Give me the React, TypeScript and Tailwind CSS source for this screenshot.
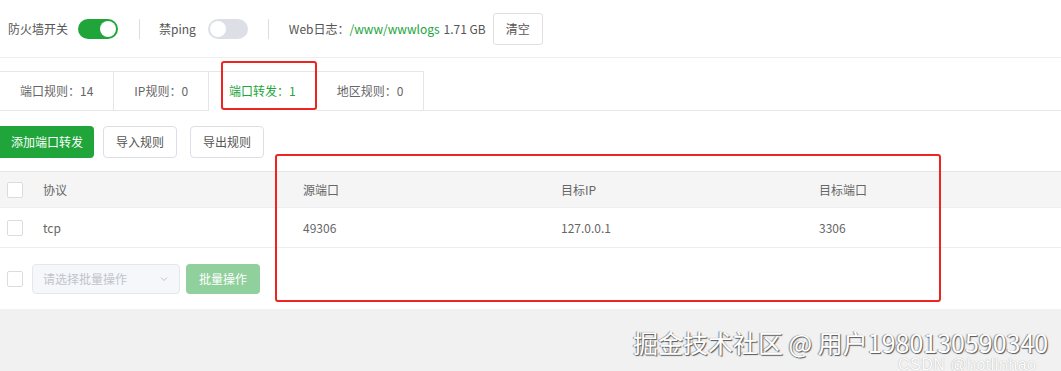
import React from 'react';

const font = { fontFamily: '"Microsoft YaHei", "Noto Sans CJK SC", "Liberation Sans", sans-serif' };

function Toggle({ on }: { on: boolean }) {
  return (
    <div
      className={`w-[40px] h-[20px] rounded-full flex items-center px-[2px] ${
        on ? 'bg-[#20a53a] justify-end' : 'bg-[#dcdfe6] justify-start'
      }`}
    >
      <div className="w-[16px] h-[16px] rounded-full bg-white" />
    </div>
  );
}

function Checkbox() {
  return <div className="w-[16px] h-[16px] border border-[#dcdcdc] rounded-[2px] bg-white" />;
}

function Tab({ label, active }: { label: string; active?: boolean }) {
  return (
    <div
      className={`h-[40px] px-[20px] flex items-center border-r border-t border-[#e6e6e6] text-[12px] ${
        active ? 'text-[#20a53a] border-b border-b-white' : 'text-[#666] border-b border-b-[#e6e6e6]'
      }`}
    >
      {label}
    </div>
  );
}

const cols = ['w-[260px]', 'w-[258px]', 'w-[258px]', 'w-[258px]'];

function Row({ cells, header }: { cells: string[]; header?: boolean }) {
  return (
    <div
      className={`flex items-center border-b border-[#eeeeee] text-[12px] text-[#666] ${
        header ? 'h-[37px] bg-[#f5f5f5] border-t border-t-[#e6e6e6]' : 'h-[40px] bg-white'
      }`}
    >
      <div className="w-[30px] shrink-0 pl-[7px]">
        <Checkbox />
      </div>
      {cells.map((c, i) => (
        <div key={i} className={`${cols[i]} shrink-0 pl-[13px]`}>
          {c}
        </div>
      ))}
    </div>
  );
}

export default function App() {
  return (
    <div className="relative w-[1061px] h-[371px] overflow-hidden bg-[#f1f1f1]" style={font}>
      <div className="bg-white">
        {/* top switches */}
        <div className="h-[58px] flex items-center pl-[8px] text-[12px] text-[#555] border-b border-[#eeeeee]">
          <span>防火墙开关</span>
          <div className="ml-[10px]">
            <Toggle on />
          </div>
          <div className="ml-[21px] w-px h-[20px] bg-[#dddddd]" />
          <span className="ml-[19px]">禁ping</span>
          <div className="ml-[12px]">
            <Toggle on={false} />
          </div>
          <div className="ml-[20px] w-px h-[20px] bg-[#dddddd]" />
          <span className="ml-[20px]">Web日志：</span>
          <span className="text-[#20a53a]">/www/wwwlogs</span>
          <span className="ml-[4px]">1.71 GB</span>
          <button className="ml-[7px] h-[32px] w-[50px] border border-[#e0e0e0] rounded-[3px] bg-white text-[12px] text-[#555]">
            清空
          </button>
        </div>

        {/* tabs */}
        <div className="pt-[13px] flex">
          <Tab label="端口规则：14" />
          <Tab label="IP规则：0" />
          <Tab label="端口转发：1" active />
          <Tab label="地区规则：0" />
          <div className="flex-1 border-b border-[#e6e6e6]" />
        </div>

        {/* actions */}
        <div className="flex items-center gap-[9px] pt-[15px] pb-[13px]">
          <button className="h-[32px] px-[11px] bg-[#20a53a] text-white text-[12px] rounded-r-[4px]">添加端口转发</button>
          <button className="h-[32px] px-[12px] border border-[#dcdfe6] rounded-[4px] bg-white text-[12px] text-[#555]">
            导入规则
          </button>
          <button className="ml-[4px] h-[32px] px-[12px] border border-[#dcdfe6] rounded-[4px] bg-white text-[12px] text-[#555]">
            导出规则
          </button>
        </div>

        {/* table */}
        <Row header cells={['协议', '源端口', '目标IP', '目标端口']} />
        <Row cells={['tcp', '49306', '127.0.0.1', '3306']} />
        <div className="h-[61px] flex items-center">
          <div className="w-[30px] shrink-0 pl-[7px]">
            <Checkbox />
          </div>
          <div className="ml-[2px] w-[148px] h-[30px] border border-[#e4e7ed] bg-[#f5f7fa] rounded-[4px] flex items-center justify-between px-[10px] text-[12px] text-[#c0c4cc]">
            <span>请选择批量操作</span>
            <svg width="10" height="10" viewBox="0 0 10 10" fill="none" stroke="#c0c4cc" strokeWidth="1">
              <path d="M2 3.5 L5 6.5 L8 3.5" />
            </svg>
          </div>
          <button className="ml-[6px] h-[30px] w-[74px] bg-[#90d09c] rounded-[4px] text-white text-[12px]">批量操作</button>
        </div>
      </div>

      {/* annotation boxes */}
      <div className="absolute left-[221px] top-[61px] w-[96px] h-[49px] border-2 border-[#ee2420] rounded-[3px]" />
      <div className="absolute left-[275px] top-[154px] w-[666px] h-[148px] border-2 border-[#ee2420] rounded-[3px]" />

      {/* watermark */}
      <div
        className="absolute left-[898px] top-[358px] text-[16px] leading-[13px] text-white tracking-[0.5px] whitespace-nowrap"
        style={{ fontFamily: '"Liberation Sans", sans-serif', textShadow: '0 0 1px #999' }}
      >
        CSDN @hotlinhao
      </div>
      <div className="absolute left-[633px] top-[330px] text-[25px] leading-[24px] text-white whitespace-nowrap [text-shadow:1px_1px_1px_#555,-1px_0_1px_#888]">
        掘金技术社区 @ 用户1980130590340
      </div>
    </div>
  );
}
